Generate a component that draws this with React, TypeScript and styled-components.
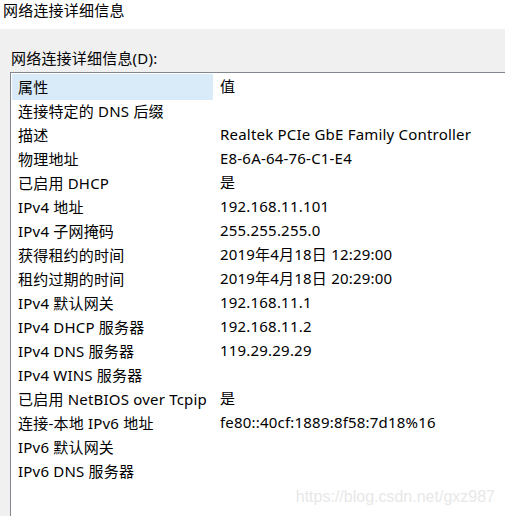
import styled, { createGlobalStyle } from "styled-components";

const rows: [string, string][] = [
  ["连接特定的 DNS 后缀", ""],
  ["描述", "Realtek PCIe GbE Family Controller"],
  ["物理地址", "E8-6A-64-76-C1-E4"],
  ["已启用 DHCP", "是"],
  ["IPv4 地址", "192.168.11.101"],
  ["IPv4 子网掩码", "255.255.255.0"],
  ["获得租约的时间", "2019年4月18日 12:29:00"],
  ["租约过期的时间", "2019年4月18日 20:29:00"],
  ["IPv4 默认网关", "192.168.11.1"],
  ["IPv4 DHCP 服务器", "192.168.11.2"],
  ["IPv4 DNS 服务器", "119.29.29.29"],
  ["IPv4 WINS 服务器", ""],
  ["已启用 NetBIOS over Tcpip", "是"],
  ["连接-本地 IPv6 地址", "fe80::40cf:1889:8f58:7d18%16"],
  ["IPv6 默认网关", ""],
  ["IPv6 DNS 服务器", ""],
];

const GlobalStyle = createGlobalStyle`
  html, body {
    margin: 0;
    padding: 0;
    overflow: hidden;
    background: #f0f0f0;
  }
  body {
    font-family: "Noto Sans", "Noto Sans CJK SC", sans-serif;
    font-size: 15px;
    letter-spacing: 0.2px;
    color: #000;
  }
`;

const App = () => {
  return (
    <Window>
      <GlobalStyle />
      <TitleBar>网络连接详细信息</TitleBar>
      <Body>
        <Label>网络连接详细信息(D):</Label>
        <ListBox>
          <HeaderRow>
            <NameCell header>属性</NameCell>
            <ValueCell>值</ValueCell>
          </HeaderRow>
          {rows.map(([name, value]) => (
            <Row key={name}>
              <NameCell>{name}</NameCell>
              <ValueCell>{value}</ValueCell>
            </Row>
          ))}
        </ListBox>
      </Body>
      <Watermark>https://blog.csdn.net/gxz987</Watermark>
    </Window>
  );
};

const Window = styled.div`
  position: relative;
  width: 505px;
  height: 516px;
  overflow: hidden;
  background: #f0f0f0;
`;
const TitleBar = styled.div`
  height: 29px;
  line-height: 20px;
  padding-left: 3px;
  background: #fff;
`;
const Body = styled.div`
  padding: 16px 0 0 10px;
`;
const Label = styled.div`
  height: 27px;
  line-height: 26px;
  padding-left: 1px;
`;
const ListBox = styled.div`
  height: 600px;
  background: #fff;
  border-top: 1px solid #828790;
  border-left: 1px solid #828790;
  padding: 1px 0 0 1px;
`;
const Row = styled.div`
  display: flex;
  align-items: center;
  height: 24px;
  padding-bottom: 2px;
  box-sizing: border-box;
`;
// header band is 26px tall but the next row starts 1px under it
const HeaderRow = styled(Row)`
  height: 25px;
  align-items: flex-start;
  padding-bottom: 0;
`;
const NameCell = styled.div<{ header?: boolean }>`
  width: 201px;
  display: flex;
  align-items: center;
  padding-left: 6px;
  box-sizing: border-box;
  white-space: nowrap;
  height: ${(p) => (p.header ? "26px" : "auto")};
  padding-bottom: ${(p) => (p.header ? "2px" : "0")};
  background: ${(p) => (p.header ? "#d9ebf9" : "transparent")};
`;
const ValueCell = styled.div`
  padding-left: 7px;
  white-space: nowrap;
  line-height: 24px;
  ${HeaderRow} & {
    line-height: 24px;
  }
`;
const Watermark = styled.div`
  position: absolute;
  right: 10px;
  bottom: 10px;
  color: #e8e8e8;
  font-family: "Liberation Sans", Arial, sans-serif;
  font-size: 16px;
  letter-spacing: 0;
`;

export default App;
